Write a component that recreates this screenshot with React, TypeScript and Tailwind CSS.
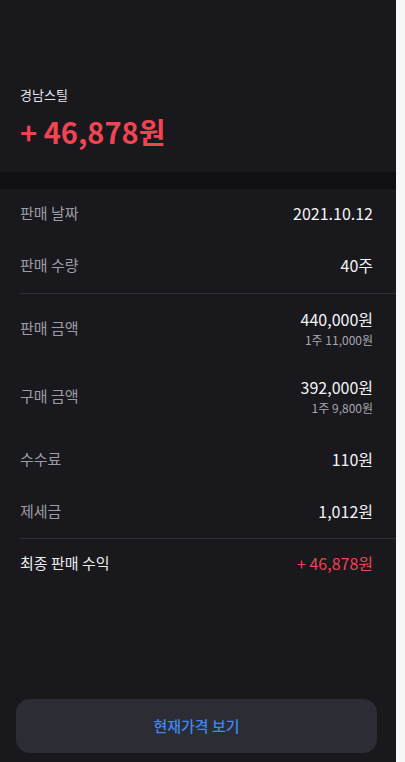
const font = { fontFamily: '"Noto Sans CJK KR", "Noto Sans", sans-serif' };

type Row = {
  label: string;
  value: string;
  sub?: string;
  red?: boolean;
  strong?: boolean;
};

function InfoRow({ label, value, sub, red, strong }: Row) {
  return (
    <div className={`flex items-center justify-between pr-[23px] ${sub ? 'h-[68px]' : 'h-[48px]'}`}>
      <span className={`text-[15px] ${strong ? 'text-[#ececef]' : 'text-[#9c9ca5]'}`}>{label}</span>
      <div className="flex flex-col items-end">
        <span className={`text-[16px] leading-[20px] ${red ? 'text-[#f04452]' : 'text-[#f3f3f5]'}`}>
          {value}
        </span>
        {sub && <span className="mt-[3px] text-[12px] leading-[16px] text-[#a6a6ad]">{sub}</span>}
      </div>
    </div>
  );
}

export default function App() {
  return (
    <div className="flex h-[762px] w-[405px] overflow-hidden" style={font}>
      <div className="flex w-[396px] flex-col bg-[#18181d]">
        <div className="flex h-[172px] flex-col px-5 pt-[85px]">
          <span className="text-[13px] leading-[20px] text-[#e6e6ea]">경남스틸</span>
          <span className="mt-[8px] text-[29px] font-semibold leading-[36px] text-[#f04452]">+ 46,878원</span>
        </div>
        <div className="h-[17px] bg-[#101013]" />

        <div className="flex flex-col pl-5">
          <div className="flex flex-col gap-1">
            <InfoRow label="판매 날짜" value="2021.10.12" />
            <InfoRow label="판매 수량" value="40주" />
          </div>
          <div className="mt-1 h-px bg-[#303037]" />
          <InfoRow label="판매 금액" value="440,000원" sub="1주 11,000원" />
          <InfoRow label="구매 금액" value="392,000원" sub="1주 9,800원" />
          <div className="mt-[5px] flex flex-col gap-1">
            <InfoRow label="수수료" value="110원" />
            <InfoRow label="제세금" value="1,012원" />
          </div>
          <div className="mt-[3px] h-px bg-[#303037]" />
          <InfoRow label="최종 판매 수익" value="+ 46,878원" red strong />
        </div>

        <div className="flex-1" />
        <div className="pb-[9px] pl-4 pr-[19px]">
          <button className="flex h-[54px] w-full items-center justify-center rounded-[14px] bg-[#2c2c35] text-[15px] font-medium text-[#3f86f0]">
            현재가격 보기
          </button>
        </div>
      </div>
      <div className="w-[9px] bg-[#f7f7f8]" />
    </div>
  );
}
